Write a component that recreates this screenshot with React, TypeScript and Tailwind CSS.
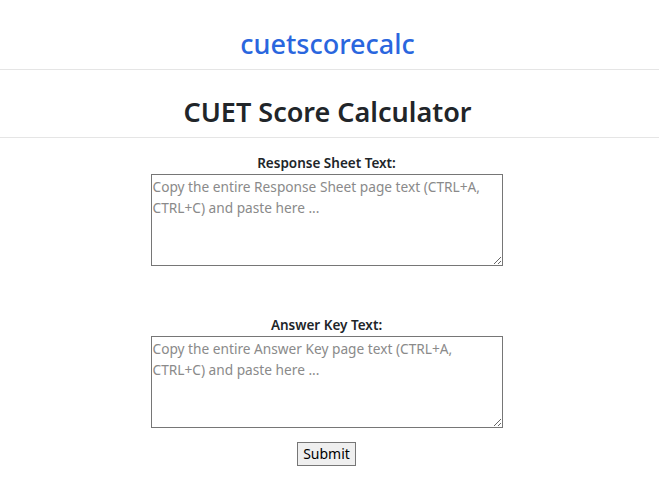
import React from 'react';

const font = { fontFamily: '"Segoe UI", "Noto Sans", "Open Sans", sans-serif' };

const Field = ({ label, placeholder }: { label: string; placeholder: string }) => (
    <div className="flex flex-col items-center">
        <label className="text-[13.5px] font-semibold text-[#212529] leading-[18px] mb-[2px]">{label}</label>
        <textarea
            placeholder={placeholder}
            className="w-[352px] h-[92px] border border-[#767676] px-[1px] py-[1px] text-[13.7px] leading-[21px] text-[#212529] placeholder:text-[#8a8a8a] resize-y"
        />
    </div>
);

export default function App() {
    return (
        <div className="min-h-screen bg-white text-[#212529]" style={font}>
            <header className="h-[70px] border-b border-[#e5e5e5] flex items-center justify-center">
                <a className="text-[27px] font-medium text-[#2a66de] leading-none mt-[18px] ml-[-4px]">cuetscorecalc</a>
            </header>
            <div className="h-[68px] border-b border-[#e5e5e5] flex items-center justify-center">
                <h1 className="text-[27px] font-semibold leading-none mt-[16px] mb-0 ml-[-4px]">CUET Score Calculator</h1>
            </div>
            <form className="flex flex-col items-center pt-[16px] pr-[6px]">
                <Field
                    label="Response Sheet Text:"
                    placeholder="Copy the entire Response Sheet page text (CTRL+A, CTRL+C) and paste here ..."
                />
                <div className="h-[50px]" />
                <Field
                    label="Answer Key Text:"
                    placeholder="Copy the entire Answer Key page text (CTRL+A, CTRL+C) and paste here ..."
                />
                <button
                    type="button"
                    className="mt-[14px] h-[24px] px-[5px] bg-[#efefef] border border-[#767676] text-[14px] leading-none text-black"
                >
                    Submit
                </button>
            </form>
        </div>
    );
}
